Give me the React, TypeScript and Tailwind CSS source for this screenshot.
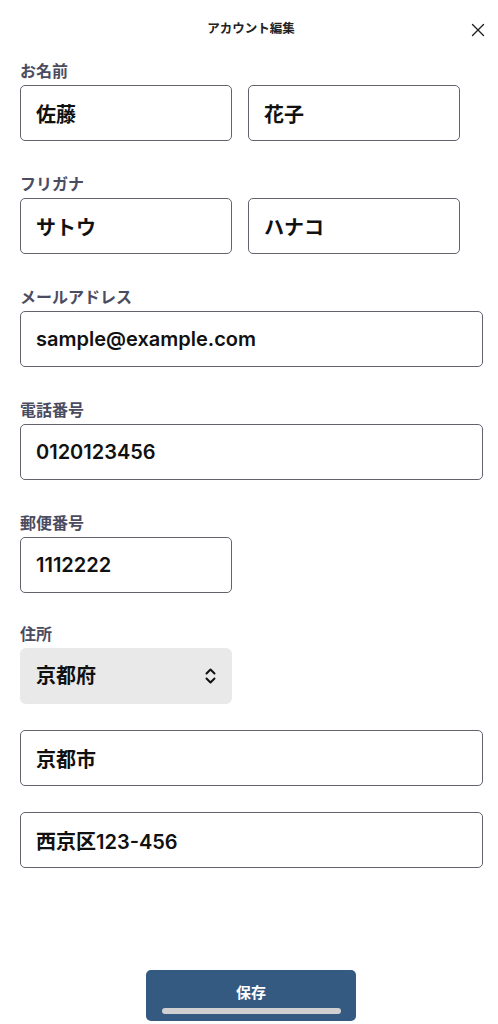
import { useState } from "react";

const font = { fontFamily: 'Inter, "Noto Sans CJK JP", sans-serif' };

const Label = ({ children }: { children: React.ReactNode }) => (
  <p className="text-[16px] leading-5 font-semibold text-[#4b4c5f]">{children}</p>
);

const Field = ({ value, wide }: { value: string; wide?: boolean }) => {
  const [v, setV] = useState(value);
  return (
    <input
      value={v}
      onChange={(e) => setV(e.target.value)}
      className={`${wide ? "w-full" : "w-[212px]"} h-[56px] rounded-[5px] border border-[#62636f] bg-white px-[15px] text-[20px] font-semibold text-[#111] outline-none`}
    />
  );
};

const Chevrons = () => (
  <svg width="11" height="16" viewBox="0 0 11 16" fill="none" stroke="#111" strokeWidth="2" strokeLinecap="round" strokeLinejoin="round">
    <path d="M1.5 5.5 5.5 1.5 9.5 5.5" />
    <path d="M1.5 10.5 5.5 14.5 9.5 10.5" />
  </svg>
);

const App = () => {
  return (
    <div className="relative min-h-screen h-[1024px] bg-white flex flex-col overflow-hidden" style={font}>
      <div className="relative h-[61px] flex items-center justify-center">
        <h1 className="text-[12.5px] font-bold text-[#222] -mt-[2px] ml-[4px]">アカウント編集</h1>
        <button className="absolute right-[12px] top-[22px] p-[1px]">
          <svg width="14" height="14" viewBox="0 0 14 14" stroke="#222" strokeWidth="1.4" strokeLinecap="round">
            <path d="M1.5 1.5 12.5 12.5M12.5 1.5 1.5 12.5" />
          </svg>
        </button>
      </div>

      <div className="flex flex-col gap-[33px] pl-5 pr-[15px]">
        <div className="flex flex-col gap-1">
          <Label>お名前</Label>
          <div className="flex gap-4">
            <Field value="佐藤" />
            <Field value="花子" />
          </div>
        </div>

        <div className="flex flex-col gap-1">
          <Label>フリガナ</Label>
          <div className="flex gap-4">
            <Field value="サトウ" />
            <Field value="ハナコ" />
          </div>
        </div>

        <div className="flex flex-col gap-1">
          <Label>メールアドレス</Label>
          <Field value="sample@example.com" wide />
        </div>

        <div className="flex flex-col gap-1">
          <Label>電話番号</Label>
          <Field value="0120123456" wide />
        </div>

        <div className="flex flex-col gap-1">
          <Label>郵便番号</Label>
          <Field value="1112222" />
        </div>

        <div className="flex flex-col gap-1 -mt-[2px]">
          <Label>住所</Label>
          <div className="flex flex-col gap-[26px]">
            <div className="w-[212px] h-[56px] rounded-[6px] bg-[#e9e9ea] px-4 flex items-center justify-between">
              <span className="text-[20px] font-semibold text-[#111]">京都府</span>
              <Chevrons />
            </div>
            <Field value="京都市" wide />
            <Field value="西京区123-456" wide />
          </div>
        </div>
      </div>

      <div className="flex-1" />

      <div className="flex justify-center pb-[3px] pl-[4px]">
        <button className="w-[210px] h-[51px] rounded-[5px] bg-[#345a82] text-white text-[15px] font-bold pb-[4px]">
          保存
        </button>
      </div>

      <div className="absolute left-[162px] bottom-[10px] w-[179px] h-[6px] rounded-full bg-[#d0d0d0]" />
    </div>
  );
};

export default App;
